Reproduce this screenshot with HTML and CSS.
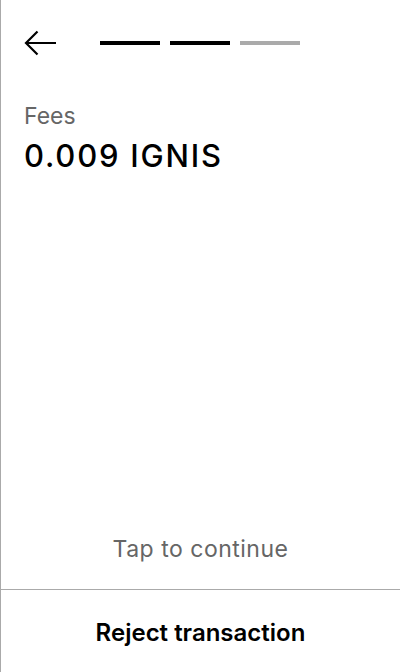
FILE: index.html
```html
<!DOCTYPE html>
<html>
<head>
<meta charset="utf-8">
<link rel="stylesheet" href="styles.css">
</head>
<body>
<div class="screen">
  <header class="header">
    <button class="back" aria-label="Back">
      <svg width="32" height="26" viewBox="0 0 32 26"><path d="M32 13H2.5M13.5 1.5L2 13l11.5 11.5" fill="none" stroke="#000" stroke-width="2.2"/></svg>
    </button>
    <div class="steps">
      <span class="step done"></span>
      <span class="step done"></span>
      <span class="step"></span>
    </div>
  </header>
  <main class="content">
    <div class="label">Fees</div>
    <div class="value">0.009 IGNIS</div>
  </main>
  <div class="tap">Tap to continue</div>
  <footer class="footer">
    <button class="reject">Reject transaction</button>
  </footer>
</div>
</body>
</html>
```
FILE: styles.css
```css
html, body {
  margin: 0;
  padding: 0;
  background: #fff;
}
body {
  font-family: Inter, "Noto Sans", sans-serif;
  color: #000;
}
.screen {
  height: 672px;
  box-sizing: border-box;
  border-left: 1px solid #aaa;
  display: flex;
  flex-direction: column;
}
.header {
  display: flex;
  align-items: center;
  padding: 30px 0 0 23px;
  height: 26px;
}
.back {
  border: 0;
  background: none;
  padding: 0;
  width: 32px;
  height: 26px;
  display: block;
}
.back svg { display: block; }
.steps {
  display: flex;
  gap: 10px;
  margin-left: 44px;
}
.step {
  display: block;
  width: 60px;
  height: 4px;
  background: #aaa;
}
.step.done { background: #000; }
.content {
  flex: 1;
  padding: 46px 23px 0;
}
.label {
  font-size: 23px;
  line-height: 28px;
  color: #666;
}
.value {
  font-size: 31px;
  line-height: 36px;
  letter-spacing: 1.8px;
  font-weight: 450;
  margin-top: 8px;
  color: #000;
}
.tap {
  text-align: center;
  font-size: 23px;
  line-height: 28px;
  letter-spacing: 0.5px;
  color: #666;
  padding-bottom: 26px;
}
.footer {
  border-top: 1px solid #aaa;
  height: 83px;
  box-sizing: border-box;
  display: flex;
}
.reject {
  flex: 1;
  border: 0;
  background: none;
  font-family: inherit;
  font-size: 24px;
  font-weight: 600;
  color: #000;
  padding: 2px 0 0;
}
```
